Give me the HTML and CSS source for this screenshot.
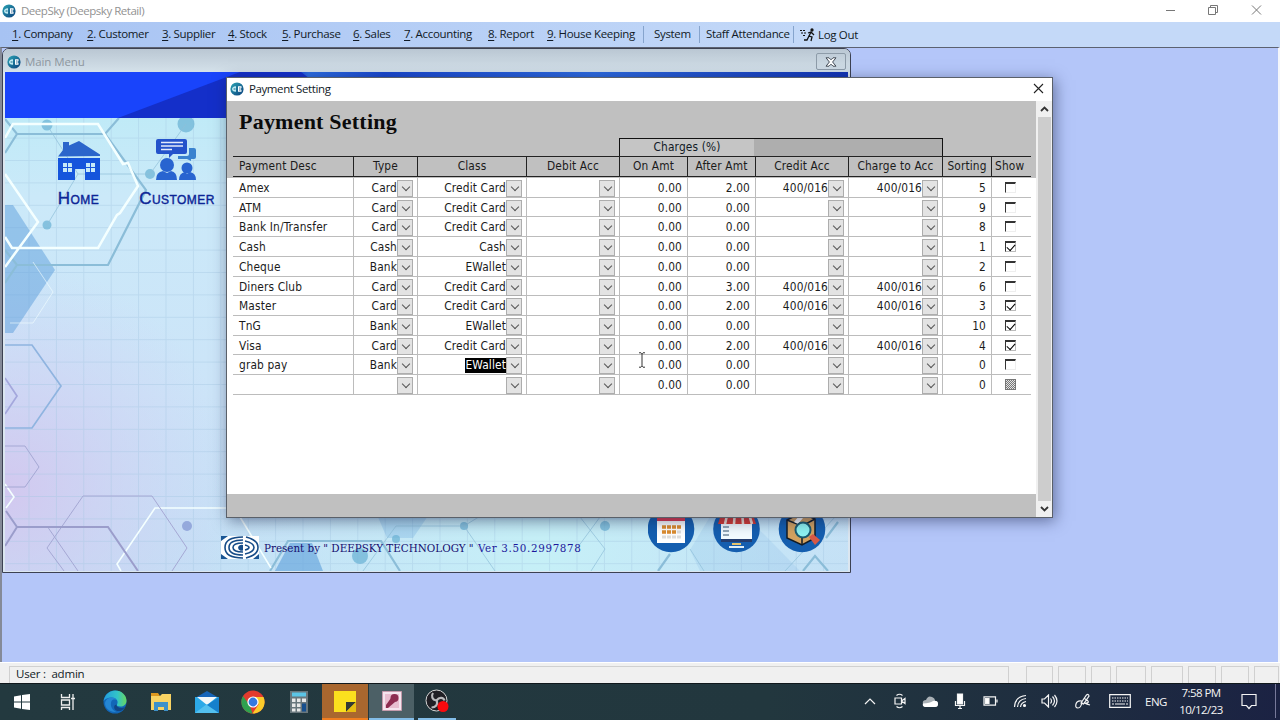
FILE: index.html
```html
<!DOCTYPE html>
<html lang="en">
<head>
<meta charset="utf-8">
<title>DeepSky (Deepsky Retail)</title>
<link rel="stylesheet" href="styles.css">
</head>
<body>
<svg class="defs" width="0" height="0">
  <defs>
    <linearGradient id="lg" x1="0" y1="0" x2="1" y2="1"><stop offset="0" stop-color="#2ba5b5"/><stop offset="1" stop-color="#0a3f7c"/></linearGradient>
    <symbol id="logo" viewBox="0 0 14 14">
      <circle cx="7" cy="7" r="6.600" fill="url(#lg)"/>
      <path d="M6 4.200C3.500 4 2 5.500 2 7s1.500 3 4 2.800z" fill="#bfeaf2"/><path d="M3.600 7h2" stroke="#12668c"/>
      <path d="M8 4.200h3.500V6L10.500 7l1 1v1.800H8z" fill="#fff"/><path d="M9 6h1.500M9 8h1.500" stroke="#12508c" stroke-width=".8"/>
    </symbol>
  </defs>
</svg>
<div class="app">
  <header class="titlebar">
    <svg class="logo" width="14" height="14"><use href="#logo"/></svg>
    <span class="app-title">DeepSky (Deepsky Retail)</span>
    <svg class="winctl" width="100" height="16" viewBox="0 0 100 16" fill="none" stroke="#777" stroke-width="1">
      <path d="M4 8.500h9"/><path d="M46.500 5.500h7v7h-7zM48.500 5.500v-2h7v7h-2"/><path d="M90 3.500l9 9M99 3.500l-9 9"/>
    </svg>
  </header>
  <nav class="menubar">
    <span class="mi w75"><u>1</u>. Company</span><span class="mi w75"><u>2</u>. Customer</span><span class="mi w66"><u>3</u>. Supplier</span><span class="mi w54"><u>4</u>. Stock</span><span class="mi w71"><u>5</u>. Purchase</span><span class="mi w51"><u>6</u>. Sales</span><span class="mi w84"><u>7</u>. Accounting</span><span class="mi w59"><u>8</u>. Report</span><span class="mi w97"><u>9</u>. House Keeping</span><span class="mi sep w60">System</span><span class="mi sep staff">Staff Attendance</span><span class="mi sep logout"><svg width="16" height="14" viewBox="0 0 16 14" fill="none" stroke="#111" stroke-width="1.300"><circle cx="12" cy="2" r="1" fill="#111"/><path d="M11 4L9 8l3 1-1 4M9 8l-2 4H4M8 5l3-1 3 3"/><path d="M0 2.500h2M3 2.500h2M1 5h2M4 5h2M3 7.500h2" stroke-width="1"/></svg>Log Out</span>
  </nav>
  <main class="workspace">
    <section class="mainmenu">
      <div class="mm-title">
        <svg width="14" height="14"><use href="#logo"/></svg><span>Main Menu</span>
        <div class="mm-close"><svg width="12" height="10" viewBox="0 0 12 10"><path d="M1 .8h3l2 2 2-2h3L7.600 5 11 9.200H8l-2-2-2 2H1L4.400 5z" fill="#fff" stroke="#444d58"/></svg></div>
      </div>
      <div class="mm-body">
        <svg class="scene" width="843" height="499" viewBox="5 72 843 499">
          <defs>
            <linearGradient id="bg" x1="0" y1="0" x2="0" y2="1"><stop offset="0" stop-color="#b9ebf6"/><stop offset=".25" stop-color="#cbe9f9"/><stop offset=".65" stop-color="#cce4f8"/><stop offset="1" stop-color="#c4dff5"/></linearGradient>
            <radialGradient id="pur" gradientUnits="userSpaceOnUse" cx="5" cy="490" r="230"><stop offset="0" stop-color="#d2c8ef"/><stop offset="1" stop-color="#cfd0f4" stop-opacity="0"/></radialGradient>
            <radialGradient id="cy" gradientUnits="userSpaceOnUse" cx="540" cy="550" r="340"><stop offset="0" stop-color="#c6f0f7"/><stop offset="1" stop-color="#c5eef9" stop-opacity="0"/></radialGradient>
            <pattern id="grid" width="27.400" height="22.400" patternUnits="userSpaceOnUse" x="28.500" y="160"><path d="M.5 0v22.400M0 .5h27.400" stroke="#a2c6e2" stroke-opacity=".4" fill="none"/></pattern>
            <linearGradient id="topb" x1="0" x2="1"><stop offset="0" stop-color="#1944fb"/><stop offset=".34" stop-color="#1538dc"/><stop offset=".36" stop-color="#2d6de2"/><stop offset=".45" stop-color="#1947cf"/><stop offset=".7" stop-color="#2d6ae0"/><stop offset="1" stop-color="#1233b5"/></linearGradient>
          </defs>
          <rect x="5" y="72" width="843" height="499" fill="url(#bg)"/>
          <rect x="5" y="118" width="843" height="453" fill="url(#pur)"/>
          <rect x="5" y="118" width="843" height="453" fill="url(#cy)"/>
          <rect x="5" y="118" width="843" height="453" fill="url(#grid)"/>
          <g fill="#5b9edb" fill-opacity=".5">
            <path d="M5 205h8l42 65-42 63H5z"/><path d="M375 510h57l-19 28h-26z" fill-opacity=".25"/><path d="M275 571l15-28h22l11 28z" fill-opacity=".6"/><path d="M714 510l-24 40 10 21h100l-60-61z" fill-opacity=".13"/>
          </g>
          <g fill="#6db4d6" fill-opacity=".75"><circle cx="47" cy="125" r="5.500"/><circle cx="186" cy="124" r="8.500"/><circle cx="150" cy="174" r="5"/><circle cx="47" cy="225" r="4.500"/><circle cx="396" cy="539" r="4"/><circle cx="464" cy="526" r="4"/><circle cx="360" cy="556" r="8"/><circle cx="605" cy="526" r="5"/></g>
          <circle cx="187" cy="526" r="5" fill="#95a9dc"/>
          <g fill="none" stroke="#8bbdd8" stroke-width="2.200">
            <path d="M5 119l12 15h88l14-16M105 134l41 56-38 75H17L5 250M17 134L5 153M17 265L5 283"/>
            <path d="M270 571l18-30h93l19 30M658 571l12-17M803 571l12-15 13 15M826 538l12-16"/>
          </g>
          <g fill="none" stroke="#8fbfd8" stroke-opacity=".7">
            <path d="M47 125l31 49-31 51M78 174h72l36-50M363 571l33-45h68l31 45M464 526l26-16M580 517l25 32-14 22M785 571l50-54M600 517l-25 34M690 549l14 22"/>
          </g>
          <g fill="none" stroke="#f4ffff" stroke-width="2.500">
            <path d="M5 138l8-14h85l25 40 5-1 10 23-18 27-3 2-19 33H12l-7-11M5 174l33 48L5 267"/>
            <path d="M5 484l9 13-8 11M240 508h-85l-38 56 4 7M240 517l31 51" stroke-width="1.600"/><path d="M33 262l20 30-20 31H10" stroke-width="1" stroke-opacity=".6"/>
          </g>
          <g fill="none" stroke="#8fb4e0" stroke-width="1.700"><path d="M5 345h27l29 41-29 42H5"/><path d="M5 378l12 18-12 18" stroke="#a4a7dc"/></g>
          <g fill="none" stroke="#a5a8d4"><path d="M5 446h20l14 21-14 20H5M64 571l-17-23 36-52h69l35 52-15 23M47 526l31 45"/><path d="M6 511l11 16h91l30 44M17 527L5 546" stroke="#9b9dcb" stroke-width="2"/></g>
          <rect x="5" y="72" width="843" height="46" fill="url(#topb)"/>
          <path d="M5 72h290L118 118H5z" fill="#1944fb"/><path d="M118 118L240 72h61l60 46z" fill="#142fc9"/>
        </svg>
        <div class="mm-nav">
          <div class="mm-item home">
            <svg width="42" height="40" viewBox="0 0 42 40" fill="#1555dc"><path d="M0 15.500L5 9V1h6v3.500L21 0l21 13.500v1.500z" fill="#2b65cb"/><path fill-rule="evenodd" d="M0 17h42v22H27V28h-10v11H0zM5 22v4h4v-4zM10 22v4h4v-4zM5 27v4h4v-4zM10 27v4h4v-4zM28 22v4h4v-4zM33 22v4h4v-4zM28 27v4h4v-4zM33 27v4h4v-4z"/></svg>
            <span>Home</span>
          </div>
          <div class="mm-item cust">
            <svg width="42" height="42" viewBox="0 0 42 42" fill="#2864d0"><path d="M33 9h5q2 0 2 2v7q0 2-2 2h-3v2l-4-2h-9v-3h9q2 0 2-2z" fill="#3a83cf"/><path d="M2 0h27q2 0 2 2v11q0 2-2 2H17l-4 4v-4H2q-2 0-2-2V2q0-2 2-2z" fill="#2453cb"/><path d="M5 3.500h22M5 7h22M5 10.500h11" stroke="#e4ebfc" stroke-width="1.300"/><circle cx="11" cy="26" r="7"/><path d="M0 41q0-8 7-9l4 2 4-2q6 1 6 9zM23 41q0-7 6-8l2 2 3-2q6 1 6 8z"/><circle cx="31" cy="29" r="5.500"/></svg>
            <span>Customer</span>
          </div>
        </div>
        <div class="mm-foot">
          <svg class="swirl" width="38" height="23" viewBox="0 0 38 23"><path d="M0 0h38v23H0z" fill="#fff"/><path d="M0 0h7L0 5zM0 23h7l-7-5zM38 23h-6l6-5z" fill="#1a5694"/><g fill="none" stroke="#164c88" stroke-width="1.600"><path d="M22 1Q4 1 4 11.500T22 22M22 4Q8 4 8 11.500T22 19M22 7q-10 0-10 4.500T22 16"/><path d="M25 1q12 3 12 10.500T25 22M24 5q9 2 9 6.500T24 18M24 9q4 1 4 2.500T24 14"/></g><path d="M22 9a3.500 3 0 1 0 0 5.500z" fill="#164c88"/></svg>
          <span class="present">Present by " DEEPSKY TECHNOLOGY "</span><span class="ver">Ver 3.50.2997878</span>
          <svg class="round" width="178" height="48" viewBox="0 0 178 48">
            <g fill="#145eaf"><circle cx="23" cy="24" r="23.300"/><circle cx="88.500" cy="24" r="23.300"/><circle cx="154" cy="24" r="23.300"/></g>
            <path d="M9 8h28v30H9z" fill="#fff"/><path d="M9 6h28v10H9z" fill="#e63a4e"/><path d="M14 22h19M14 27h14" stroke="#dd8c2e" stroke-width="3.500" stroke-dasharray="4 1"/><path d="M29 27h4M14 32h19" stroke="#ddd" stroke-width="3" stroke-dasharray="4 1"/>
            <path d="M73 15h31v19H73z" fill="#f3fbff"/><path d="M75 22h6M75 26h6M75 30h6" stroke="#35526e"/><path d="M73 34h31v3H73z" fill="#243e70"/><path d="M84 38h9v2h-9z" fill="#e5c26d"/><path d="M81 42h15" stroke="#ddeef8" stroke-width="2"/><path d="M74 6h30l4 13H70z" fill="#d93830"/><path d="M80 6l-3 13M87 6l-1 13M94 6l1 13M100 6l4 13" stroke="#f6ded1" stroke-width="2.600"/>
            <path d="M139 15l14-7 14 6v19l-13 7-15-7z" fill="#d3a260" stroke="#121c26" stroke-width="1.500"/><path d="M139 15l15 6 13-7M154 21v19" stroke="#121c26" stroke-width="1.500" fill="none"/><path d="M146 17l5-6 4 2-5 6zM155 10l4-2 4 2-4 3z" fill="#fff"/><path d="M161 32l4-3 7 6-5 5z" fill="#d75947"/><circle cx="155" cy="25" r="7.500" fill="#8ef3f2" stroke="#1b5b70" stroke-width="2"/>
          </svg>
        </div>
      </div>
    </section>
    <section class="dialog">
      <div class="dlg-title"><svg width="14" height="14"><use href="#logo"/></svg><span>Payment Setting</span><svg class="dlg-x" width="11" height="11" viewBox="0 0 11 11"><path d="M1 1l9 9M10 1l-9 9" stroke="#222" stroke-width="1.100"/></svg></div>
      <div class="dlg-body">
        <div class="sheet">
          <div class="sheet-head">
            <h1>Payment Setting</h1>
            <div class="charges"><div class="ch-l">Charges (%)</div><div class="ch-r"></div></div>
            <div class="row head"><span>Payment Desc</span><span>Type</span><span>Class</span><span>Debit Acc</span><span>On Amt</span><span>After Amt</span><span>Credit Acc</span><span>Charge to Acc</span><span>Sorting</span><span>Show</span></div>
          </div>
          <div class="rows">
            <div class="row"><span>Amex</span><span class="dd">Card<i></i></span><span class="dd">Credit Card<i></i></span><span class="dd"><i></i></span><span>0.00</span><span>2.00</span><span class="dd">400/016<i></i></span><span class="dd">400/016<i></i></span><span>5</span><span><b></b></span></div>
            <div class="row"><span>ATM</span><span class="dd">Card<i></i></span><span class="dd">Credit Card<i></i></span><span class="dd"><i></i></span><span>0.00</span><span>0.00</span><span class="dd"><i></i></span><span class="dd"><i></i></span><span>9</span><span><b></b></span></div>
            <div class="row"><span>Bank In/Transfer</span><span class="dd">Card<i></i></span><span class="dd">Credit Card<i></i></span><span class="dd"><i></i></span><span>0.00</span><span>0.00</span><span class="dd"><i></i></span><span class="dd"><i></i></span><span>8</span><span><b></b></span></div>
            <div class="row"><span>Cash</span><span class="dd">Cash<i></i></span><span class="dd">Cash<i></i></span><span class="dd"><i></i></span><span>0.00</span><span>0.00</span><span class="dd"><i></i></span><span class="dd"><i></i></span><span>1</span><span><b class="on"></b></span></div>
            <div class="row"><span>Cheque</span><span class="dd">Bank<i></i></span><span class="dd">EWallet<i></i></span><span class="dd"><i></i></span><span>0.00</span><span>0.00</span><span class="dd"><i></i></span><span class="dd"><i></i></span><span>2</span><span><b></b></span></div>
            <div class="row"><span>Diners Club</span><span class="dd">Card<i></i></span><span class="dd">Credit Card<i></i></span><span class="dd"><i></i></span><span>0.00</span><span>3.00</span><span class="dd">400/016<i></i></span><span class="dd">400/016<i></i></span><span>6</span><span><b></b></span></div>
            <div class="row"><span>Master</span><span class="dd">Card<i></i></span><span class="dd">Credit Card<i></i></span><span class="dd"><i></i></span><span>0.00</span><span>2.00</span><span class="dd">400/016<i></i></span><span class="dd">400/016<i></i></span><span>3</span><span><b class="on"></b></span></div>
            <div class="row"><span>TnG</span><span class="dd">Bank<i></i></span><span class="dd">EWallet<i></i></span><span class="dd"><i></i></span><span>0.00</span><span>0.00</span><span class="dd"><i></i></span><span class="dd"><i></i></span><span>10</span><span><b class="on"></b></span></div>
            <div class="row"><span>Visa</span><span class="dd">Card<i></i></span><span class="dd">Credit Card<i></i></span><span class="dd"><i></i></span><span>0.00</span><span>2.00</span><span class="dd">400/016<i></i></span><span class="dd">400/016<i></i></span><span>4</span><span><b class="on"></b></span></div>
            <div class="row"><span>grab pay</span><span class="dd">Bank<i></i></span><span class="dd"><em>EWallet</em><i></i></span><span class="dd"><i></i></span><span>0.00</span><span>0.00</span><span class="dd"><i></i></span><span class="dd"><i></i></span><span>0</span><span><b></b></span></div>
            <div class="row"><span></span><span class="dd"><i></i></span><span class="dd"><i></i></span><span class="dd"><i></i></span><span>0.00</span><span>0.00</span><span class="dd"><i></i></span><span class="dd"><i></i></span><span>0</span><span><b class="mixed"></b></span></div>
          </div>
          <div class="sheet-foot"></div>
        </div>
        <div class="scroll">
          <svg width="15" height="16" viewBox="0 0 15 16"><path d="M4 10l3.500-3.500L11 10" fill="none" stroke="#333" stroke-width="1.800"/></svg>
          <div class="thumb"></div>
          <svg width="15" height="16" viewBox="0 0 15 16"><path d="M4 6l3.500 3.500L11 6" fill="none" stroke="#333" stroke-width="1.800"/></svg>
        </div>
      </div>
      <svg class="ibeam" width="8" height="16" viewBox="0 0 8 16"><path d="M1 .8h2l1 1 1-1h2M4 1.500v13M1 15.200h2l1-1 1 1h2" fill="none" stroke="#333"/></svg>
    </section>
  </main>
  <div class="status">
    <div class="user">User :&nbsp; admin</div>
    <div class="p26"></div><div class="p27"></div><div class="p20"></div><div class="p30"></div><div class="p33"></div><div class="p29"></div><div class="p27"></div><div class="p25"></div>
  </div>
  <footer class="taskbar">
    <div class="tk t44"><svg width="16" height="16" viewBox="0 0 16 16" fill="#fff"><path d="M0 2.500L7 1.300v6.200H0zM8 1.100L16 0v7.500H8zM0 8.500h7v6.200L0 13.500zM8 8.500h8V16l-8-1.100z"/></svg></div>
    <div class="tk t47"><svg width="16" height="16" viewBox="0 0 16 16" fill="none" stroke="#eee" stroke-width="1.300"><path d="M1.500 0v3.500h8V0M1.500 6h8v5h-8zM1.500 16v-2.500h8V16M13 0v16M11 4.500h4" /></svg></div>
    <div class="tk t48"><svg width="24" height="24" viewBox="0 0 24 24"><defs><linearGradient id="eg" x1="0" x2="1"><stop offset="0" stop-color="#239ddd"/><stop offset=".6" stop-color="#32c4c8"/><stop offset="1" stop-color="#68d760"/></linearGradient></defs><circle cx="12" cy="12" r="11.500" fill="#1266b7"/><path d="M.6 11C2 4 7 .5 12 .5c7 0 11.500 5 11.500 10 0 4-3 6-6 6-3 0-4-1-3.500-2C16 11 13 7.500 8.500 7.500 5 7.500 2 9 .6 11z" fill="url(#eg)"/><path d="M8.500 11c-2 5 1 9.500 5 11-7 .5-11.500-4-11.500-9C3 9 6 7.500 8.500 7.500 12 7.500 13 9 13 10c-2-1-4 0-4.500 1z" fill="#2586d3"/><path d="M13.500 14.500c-.5 3 5 4.500 8.500 2.500-2 3.500-5 4.500-7.500 4-4-1-4.500-6-1-6.500z" fill="#104585"/></svg></div>
    <div class="tk t44"><svg width="22" height="20" viewBox="0 0 22 20"><path d="M1 1h7l2 3H1z" fill="#dc981f"/><path d="M1 4h9l2-2h9v16H1z" fill="#f8d363"/><path d="M4 10h14v9h-4v-4H8v4H4z" fill="#3d91c9"/></svg></div>
    <div class="tk t48"><svg width="24" height="22" viewBox="0 0 24 22"><path d="M12 0l12 7v2H0V7z" fill="#1765b8"/><path d="M0 6h24v16H0z" fill="#2ca9e7"/><path d="M2 6h20l-10 8z" fill="#f3f7f8"/><path d="M0 22l12-9 12 9z" fill="#53c0ef"/><path d="M24 6v16L12 14z" fill="#1680cc"/></svg></div>
    <div class="tk t44"><svg width="24" height="24" viewBox="0 0 24 24"><circle cx="12" cy="12" r="11.500" fill="#e33b2e"/><path d="M2 6l6.500 9 3 8.500A11.500 11.500 0 0 1 2 6z" fill="#2fa14f"/><path d="M12 7h10.500A11.500 11.500 0 0 1 11.500 23.500l6-9z" fill="#fbcb2a"/><circle cx="12" cy="12" r="5.600" fill="#fff"/><circle cx="12" cy="12" r="4.400" fill="#3479e0"/></svg></div>
    <div class="tk t47"><svg width="18" height="22" viewBox="0 0 18 22"><path d="M0 0h18v22H0z" fill="#69777d"/><path d="M2 1.500h14v4H2z" fill="#5bc5e6"/><g fill="#e8e8e8"><path d="M2 7.500h3.500v3.500H2zM7 7.500h3.500v3.500H7zM2 12.500h3.500V16H2zM7 12.500h3.500V16H7zM2 17.500h3.500v3H2zM7 17.500h3.500v3H7zM12 7.500h4v3.500h-4z"/></g><path d="M12 12.500h4v8h-4z" fill="#174f8e"/></svg></div>
    <div class="tk note"><svg width="22" height="21" viewBox="0 0 22 21"><path d="M0 0h22v21H0z" fill="#fbe01e"/><path d="M12 11h10L12 21z" fill="#343a34"/><path d="M22 11v10H12z" fill="#e8bd11"/></svg></div>
    <div class="tk access"><svg width="20" height="20" viewBox="0 0 20 20"><path d="M.5.500h19v19H.5z" fill="#f5e5ee" stroke="#c59bac"/><path d="M3 3h14v14H3z" fill="#e8bed0"/><circle cx="12.500" cy="7" r="4" fill="#8d2c50"/><path d="M9 7l4 4-7 6H4v-3z" fill="#8d2c50"/></svg></div>
    <div class="tk obs"><svg width="24" height="24" viewBox="0 0 24 24"><circle cx="11.500" cy="11.500" r="10.500" fill="#201f25" stroke="#d5d5d5"/><path d="M11.500 11.500C7 11 6 7 8 4M11.500 11.500c3-4 7-3 8 0M11.500 11.500c2 4-1 7-5 7" stroke="#b9b9bc" stroke-width="2.200" fill="none"/><circle cx="18" cy="17.500" r="5.500" fill="#fa0a0e"/></svg></div>
    <div class="tray">
      <div class="tk r29"><svg width="12" height="8" viewBox="0 0 12 8" class="ln"><path d="M1 7l5-5 5 5"/></svg></div>
      <div class="tk r32"><svg width="14" height="16" viewBox="0 0 14 16" class="ln"><path d="M3.500 2.500q3-2.500 6 0M3.500 13.500q3 2.500 6 0M2 5h6.500v6H2zM8.500 8L12 5.500v5z"/></svg></div>
      <div class="tk r28"><svg width="16" height="11" viewBox="0 0 16 11"><path d="M1 8Q0 4 4 4q2-5 6-3 3 1 3 4 3 0 3 3t-3 3H4q-3 0-3-3z" fill="#aab1b6"/><path d="M3 11q-3-1-2-3.500Q8 7 11 5q5-1 5 3 0 3-3 3z" fill="#fff"/></svg></div>
      <div class="tk r31"><svg width="12" height="16" viewBox="0 0 12 16" class="ln"><path d="M3.500 1h5v10h-5z" fill="#fff"/><path d="M1.500 8v4.500h9V8M6 12.500V15M4 15.500h4"/></svg></div>
      <div class="tk r30"><svg width="15" height="10" viewBox="0 0 15 10" class="ln"><path d="M1 .8h11.500v8.400H1zM14 3.500v3"/><path d="M2.500 2.500h3.500v5H2.500z" fill="#fff"/></svg></div>
      <div class="tk r30"><svg width="14" height="14" viewBox="0 0 14 14" class="ln"><path d="M1.500 13Q2 2.500 13 1.500M4.500 13Q5 5.500 13 4.500M7.500 13Q8 8.500 13 7.500"/><circle cx="11.500" cy="11.500" r="1" fill="#fff"/></svg></div>
      <div class="tk r29"><svg width="17" height="14" viewBox="0 0 17 14" class="ln"><path d="M1 5h2.500l4-4v12l-4-4H1zM9.500 4.500q2 2.500 0 5M11.500 2.500q4 4.500 0 9M13.500 1q5 6 0 12"/></svg></div>
      <div class="tk r38"><svg width="16" height="16" viewBox="0 0 16 16" class="ln"><path d="M6 10L11.500 2q2-1.500 2.500 1L8.500 11zM7 8q-5-1-6 3t2 4q3 0 4-6M9 10q3-4 4-2t-2 2 4 2M9 5l4 3"/></svg></div>
      <div class="tk r36"><svg width="22" height="14" viewBox="0 0 22 14" class="ln"><path d="M.7.700h20.600v12.600H.7z"/><path d="M3 4h16M3 7h16" stroke-dasharray="1.500 1"/><path d="M3 10h2M6 10h10M17 10h2"/></svg></div>
      <div class="tk r36 eng">ENG</div>
      <div class="clock"><span>7:58 PM</span><span>10/12/23</span></div>
      <div class="tk r42"><svg width="16" height="17" viewBox="0 0 16 17" class="ln"><path d="M1 1.500h14v11h-4.500L8 15.500l-2.500-3H1z"/></svg></div>
      <div class="peek"></div>
    </div>
  </footer>
</div>
</body>
</html>
```

FILE: styles.css
```css
* { box-sizing: border-box; }
body { margin: 0; width: 1280px; height: 720px; overflow: hidden; font-family: "Open Sans", "Noto Sans", sans-serif; font-size: 12px; color: #111a26; }
svg { display: block; flex: none; }
.defs { position: absolute; }
.app { width: 1280px; height: 720px; display: flex; flex-direction: column; background: #f0f0f0; }

.titlebar { height: 22px; background: #fff; display: flex; align-items: center; padding-left: 2px; flex: none; }
.app-title { margin: -2px 0 0 5px; color: #929292; font-size: 11.500px; letter-spacing: -.48px; white-space: nowrap; }
.winctl { margin-left: auto; margin-right: 18px; margin-top: -3px; }

.menubar { height: 25px; flex: none; display: flex; align-items: center; padding-left: 12px; background: linear-gradient(90deg, #a7c3f3, #c4d9f8 65%); white-space: nowrap; font-size: 11.500px; letter-spacing: -.33px; }
.mi { height: 17px; line-height: 15px; }
.mi u { text-underline-offset: 2px; }
.w75 { width: 75px; } .w66 { width: 66px; } .w54 { width: 54px; } .w71 { width: 71px; } .w51 { width: 51px; } .w84 { width: 84px; } .w59 { width: 59px; } .w97 { width: 96px; } .w60 { width: 56px; }
.sep { border-left: 1px solid #86a4cd; padding-left: 10px; }
.staff { width: 94px; padding-left: 6px; margin-left: 0; }
.w60 { width: 56px; }
.logout { display: flex; align-items: center; gap: 2px; padding-left: 6px; line-height: 14px; }

.workspace { position: relative; height: 615px; flex: none; background: #b4c6f9; border-top: 1px solid #5c6271; border-left: 2px solid #858a98; border-right: 2px solid #f4f6fb; overflow: hidden; }
.mainmenu { width: 849px; height: 525px; background: #dbe6f0; border: 1px solid #3c4152; border-radius: 7px 7px 0 0; padding: 0 2px 2px; display: flex; flex-direction: column; overflow: hidden; }
.mm-title { height: 23px; margin: 0 -2px; padding: 2px 4px 0; display: flex; align-items: center; background: linear-gradient(#bac7d3, #d4e1ea); color: #8e979f; font-size: 11.500px; letter-spacing: -.1px; flex: none; }
.mm-title span { margin-left: 4px; }
.mm-close { margin-left: auto; width: 30px; height: 17px; border: 1px solid #8e9ca9; border-radius: 2px; display: flex; align-items: center; justify-content: center; }
.mm-body { position: relative; height: 499px; width: 843px; display: flex; flex-direction: column; }
.scene { position: absolute; inset: 0; }
.mm-nav, .mm-foot { position: relative; display: flex; }
.mm-nav { padding-top: 67px; height: 436px; align-items: flex-start; }
.mm-item { display: flex; flex-direction: column; align-items: center; justify-content: space-between; height: 68px; font: 17px/17px "Liberation Sans", Arial, sans-serif; letter-spacing: .45px; font-variant: small-caps; color: #0c2596; -webkit-text-stroke: .4px #0c2596; }
.home { width: 147px; padding-top: 2px; } .cust { width: 50px; }
.mm-foot { padding-left: 216px; height: 62px; align-items: flex-start; font: 11.500px/16px "DejaVu Serif Condensed", "DejaVu Serif", serif; color: #150e70; white-space: nowrap; }
.swirl { margin-top: 28px; }
.present { margin: 32px 0 0 5px; width: 214px; }
.ver { margin-top: 32px; width: 170px; color: #1d189b; letter-spacing: .65px; }
.round { margin-top: -3px; }

.dialog { position: absolute; left: 224px; top: 29px; width: 827px; height: 441px; background: #fff; border: 1px solid #5a6069; box-shadow: 2px 3px 14px rgba(20, 30, 70, .5); }
.dlg-title { height: 23px; display: flex; align-items: center; padding: 0 8px 2px 3px; font-size: 11.500px; letter-spacing: -.4px; }
.dlg-title span { margin-left: 5px; }
.dlg-x { margin-left: auto; }
.dlg-body { display: flex; height: 416px; }
.sheet { width: 809px; display: flex; flex-direction: column; }
.sheet-head { background: #c0c0c0; height: 77px; padding: 0 5px 0 6px; flex: none; }
h1 { margin: 0; padding: 8px 0 0 6px; height: 37px; font: bold 22px/26px "Liberation Serif", "Times New Roman", serif; color: #0b0b0b; letter-spacing: .22px; }
.charges { margin-left: 386px; width: 324px; height: 18px; display: flex; border: 1px solid #111; border-bottom: 0; font: 11.800px/17px "DejaVu Sans Condensed", Tahoma, sans-serif; letter-spacing: .15px; text-align: center; }
.ch-l { width: 134px; background: #c5c5c5; } .ch-r { flex: 1; background: #aeaeae; }
.row { display: grid; grid-template-columns: 121px 64px 109px 93px 68px 68px 93px 94px 49px 39px; height: 19.730px; border-bottom: 1px solid #bcbcbc; font: 11.800px/20px "DejaVu Sans Condensed", Tahoma, sans-serif; letter-spacing: .15px; color: #1b1b1b; white-space: nowrap; }
.row > span { border-right: 1px solid #bcbcbc; padding-right: 5px; text-align: right; height: 19px; }
.row > span:first-child { text-align: left; padding-left: 6px; }
.row > span:last-child { border-right: 0; padding: 4px 0 0 13px; }
.row > .dd { display: flex; justify-content: flex-end; align-items: flex-start; padding-right: 4px; }
.dd i { width: 16px; height: 17px; margin-top: 2px; border: 1px solid #adadad; background: #e3e3e3; flex: none; }
.dd i::before { content: ""; display: block; width: 5px; height: 5px; margin: 3px 0 0 4.500px; border: solid #555; border-width: 0 1px 1px 0; transform: rotate(45deg); }
.dd em { font-style: normal; background: #000; color: #fff; height: 15px; line-height: 15px; margin-top: 3px; }
.row b { display: block; width: 11px; height: 11px; border: 1px solid; border-color: #333 #eee #eee #333; border-top-width: 2px; }
.row b.on::before { content: ""; display: block; width: 7px; height: 4px; margin: 1px 0 0 1px; border: solid #000; border-width: 0 0 1.500px 1.500px; transform: rotate(-48deg); }
.row b.on { border-color: #333 #bbb #bbb #333; }
.row b.mixed { background: repeating-conic-gradient(#777 0 25%, #e4e4e4 0 50%) 0 0/2px 2px; border-width: 1px; border-color: #777; }
.row.head { height: 21px; border: solid #222; border-width: 1px 0; line-height: 18px; }
.row.head > span { text-align: center; padding: 0; border-right-color: #222; }
.row.head > span:first-child { text-align: left; padding-left: 6px; }
.row.head > span:last-child { border: 0; text-align: left; padding-left: 3px; }
.rows { padding: 0 5px 0 6px; height: 316px; flex: none; }
.sheet-foot { flex: 1; background: #c0c0c0; }
.scroll { width: 16px; padding-left: 1px; background: #f0f0f0; display: flex; flex-direction: column; }
.thumb { flex: 1; background: #cdcdcd; margin: 0 1px; }
.ibeam { position: absolute; left: 411px; top: 274px; }

.status { height: 21px; flex: none; display: flex; padding: 3px 0 0 9px; border-top: 1px solid #fff; background: #f0f0f0; }
.status div { border: 1px solid #d0d0d0; border-bottom: 0; margin-right: 5px; flex: none; }
.status .user { width: 1000px; margin-right: 17px; padding-left: 6px; font-size: 11.500px; line-height: 14px; letter-spacing: -.2px; }
.p26 { width: 27px; } .p27 { width: 28px; } .p20 { width: 20px; } .p30 { width: 30px; } .p33 { width: 32px; } .p29 { width: 28px; } .p25 { width: 25px; }

.taskbar { height: 37px; flex: none; display: flex; border-top: 1px solid #10181c; background: linear-gradient(90deg, #23393f 0%, #22373e 60%, #1e2c40 85%, #1b2243); color: #f4f4f4; }
.tk { display: flex; align-items: center; justify-content: center; flex: none; }
.t44 { width: 44px; } .t47 { width: 47px; } .t48 { width: 48px; }
.note { width: 46px; background: #a9672f; border-bottom: 2px solid #ef7d20; }
.access { width: 45px; background: #4c6066; border-bottom: 2px solid #83bde8; margin-left: 1px; }
.obs { width: 38px; margin-left: 4px; border-bottom: 2px solid #83bde8; }
.tray { margin-left: auto; width: 425px; display: flex; padding-bottom: 2px; }
.r28 { width: 28px; } .r29 { width: 29px; } .r30 { width: 30px; } .r31 { width: 31px; } .r32 { width: 32px; } .r36 { width: 36px; } .r38 { width: 38px; } .r42 { width: 42px; }
.ln { fill: none; stroke: #f4f4f4; stroke-width: 1.200; }
.eng { font-size: 11.500px; letter-spacing: -.5px; }
.clock { width: 54px; display: flex; flex-direction: column; align-items: center; justify-content: center; font-size: 11.500px; line-height: 17px; letter-spacing: -.55px; }
.peek { margin-left: 5px; border-left: 1px solid #77799a; }
```
